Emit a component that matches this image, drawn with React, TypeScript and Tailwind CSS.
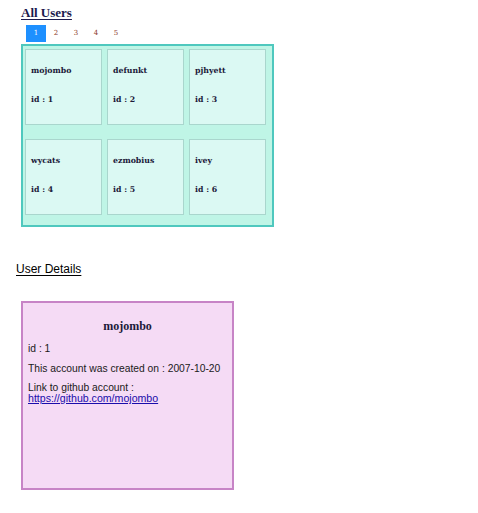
const users = [
  { login: 'mojombo', id: 1 },
  { login: 'defunkt', id: 2 },
  { login: 'pjhyett', id: 3 },
  { login: 'wycats', id: 4 },
  { login: 'ezmobius', id: 5 },
  { login: 'ivey', id: 6 },
]

const pages = [1, 2, 3, 4, 5]

export default function App() {
  return (
    <div className="min-h-[513px] w-[478px] bg-white">
      <div className="pl-[21px] pt-[6px]">
        <h2 className="font-['Liberation_Serif',serif] text-[13px] font-bold leading-[14px] text-[#1c1a4d] underline underline-offset-2">
          All Users
        </h2>

        <div className="mt-[5px] flex pl-[5px]">
          {pages.map((page) => (
            <span
              key={page}
              className={
                page === 1
                  ? "flex h-[17px] w-[20px] items-center justify-center bg-[#1e90ff] font-['DejaVu_Serif',serif] text-[7px] text-white"
                  : "flex h-[17px] w-[20px] items-center justify-center font-['DejaVu_Serif',serif] text-[7px] text-[#8b3a2a]"
              }
            >
              {page}
            </span>
          ))}
        </div>

        <div className="mt-[2px] w-[253px] border-2 border-[#4fc8be] bg-[#bff5e6] pb-[10px] pl-[2px] pt-[3px]">
          <div className="grid grid-cols-[77px_77px_77px] gap-x-[5px] gap-y-[14px]">
            {users.map((user) => (
              <div
                key={user.id}
                className="h-[76px] border border-[#a9d6cd] bg-[#dbf9f3] pl-[5px] font-['DejaVu_Serif',serif] text-[7.8px] font-bold text-[#1c1a3a]"
              >
                <p className="mt-[16px] leading-[10px]">{user.login}</p>
                <p className="mt-[19px] leading-[10px]">id : {user.id}</p>
              </div>
            ))}
          </div>
        </div>
      </div>

      <div className="mt-[35px] pl-[16px]">
        <h3 className="font-['Liberation_Sans',sans-serif] text-[12px] leading-[14px] text-black underline underline-offset-2">
          User Details
        </h3>
      </div>

      <div className="ml-[21px] mt-[25px] h-[189px] w-[213px] border-2 border-[#c784c6] bg-[#f5dbf5] px-[5px] font-['Liberation_Sans',sans-serif] text-[10.3px] text-[#1a1a1a]">
        <h4 className="mt-[16px] text-center font-['Liberation_Serif',serif] text-[12px] font-bold leading-[14px] text-[#1c1a3a]">
          mojombo
        </h4>
        <p className="mt-[10px] leading-[12px]">id : 1</p>
        <p className="mt-[8px] leading-[12px]">This account was created on : 2007-10-20</p>
        <p className="mt-[7px] leading-[11px]">
          Link to github account :
          <br />
          <a href="#" className="text-[10.6px] text-[#1a0dab] underline">
            https://github.com/mojombo
          </a>
        </p>
      </div>
    </div>
  )
}
